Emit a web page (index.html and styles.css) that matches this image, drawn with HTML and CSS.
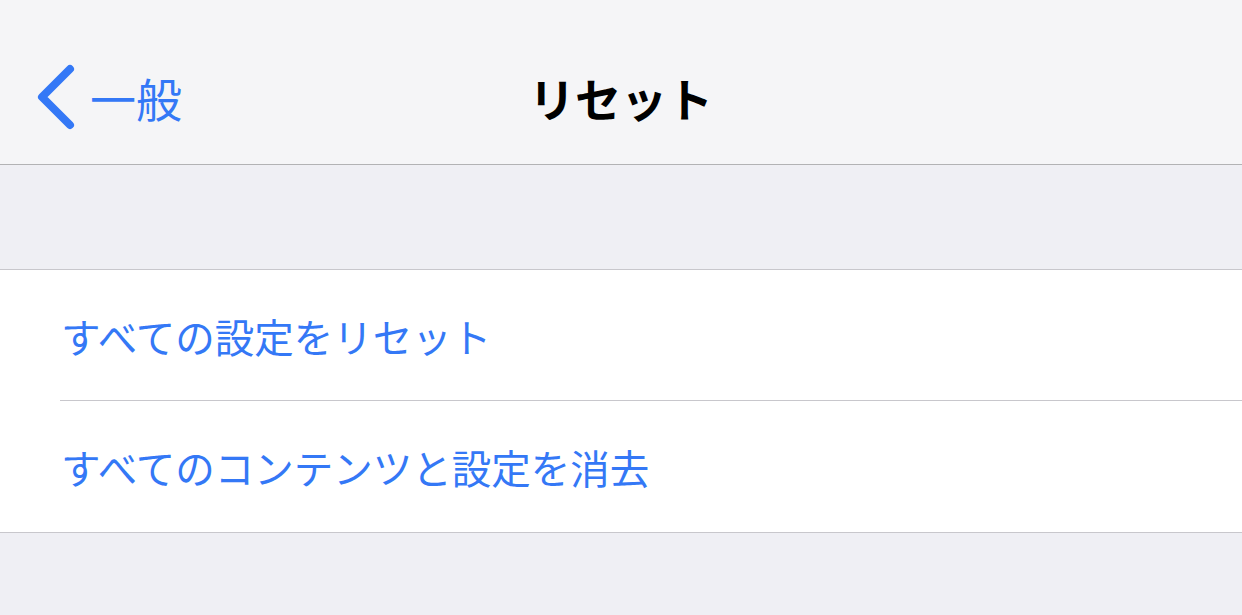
FILE: index.html
```html
<!DOCTYPE html>
<html lang="ja">
<head>
    <meta charset="UTF-8">
    <title>リセット</title>
    <link rel="stylesheet" href="styles.css">
</head>
<body>

    <!-- Navigation bar -->
    <div class="navbar">
        <div class="back">
            <svg class="chevron" width="40" height="66" viewBox="0 0 40 66">
                <path d="M34 5 L6 33 L34 61" fill="none" stroke="#3478f6" stroke-width="8" stroke-linecap="round" stroke-linejoin="round"/>
            </svg>
            <span class="back-label">一般</span>
        </div>
        <div class="title">リセット</div>
    </div>

    <div class="spacer"></div>

    <!-- Reset options -->
    <div class="group">
        <div class="row">すべての設定をリセット</div>
        <div class="row last">すべてのコンテンツと設定を消去</div>
    </div>

</body>
</html>
```

FILE: styles.css
```css
body {
    margin: 0;
    background-color: #efeff4;
    font-family: "Noto Sans CJK JP", "Noto Sans", sans-serif;
    height: 615px;
    overflow: hidden;
}

.navbar {
    position: relative;
    height: 134px;
    padding-top: 30px;
    background-color: #f5f5f7;
    border-bottom: 1px solid #b2b2b4;
    display: flex;
    align-items: center;
}

.back {
    display: flex;
    align-items: center;
    padding-left: 36px;
    gap: 14px;
}

.back-label {
    color: #3478f6;
    font-size: 46px;
    line-height: 1;
}

.title {
    position: absolute;
    left: 0;
    right: 0;
    top: 30px;
    bottom: 0;
    display: flex;
    align-items: center;
    justify-content: center;
    font-size: 46px;
    font-weight: bold;
    color: #000;
    pointer-events: none;
}

.spacer {
    height: 104px;
}

.group {
    background-color: #fff;
    border-top: 1px solid #c8c7cc;
    border-bottom: 1px solid #c8c7cc;
    padding-left: 60px;
}

.row {
    height: 130px;
    display: flex;
    align-items: center;
    color: #3478f6;
    font-size: 39.5px;
    padding-left: 1px;
    border-bottom: 1px solid #c8c7cc;
}

.row.last {
    height: 131px;
    border-bottom: none;
}
```
